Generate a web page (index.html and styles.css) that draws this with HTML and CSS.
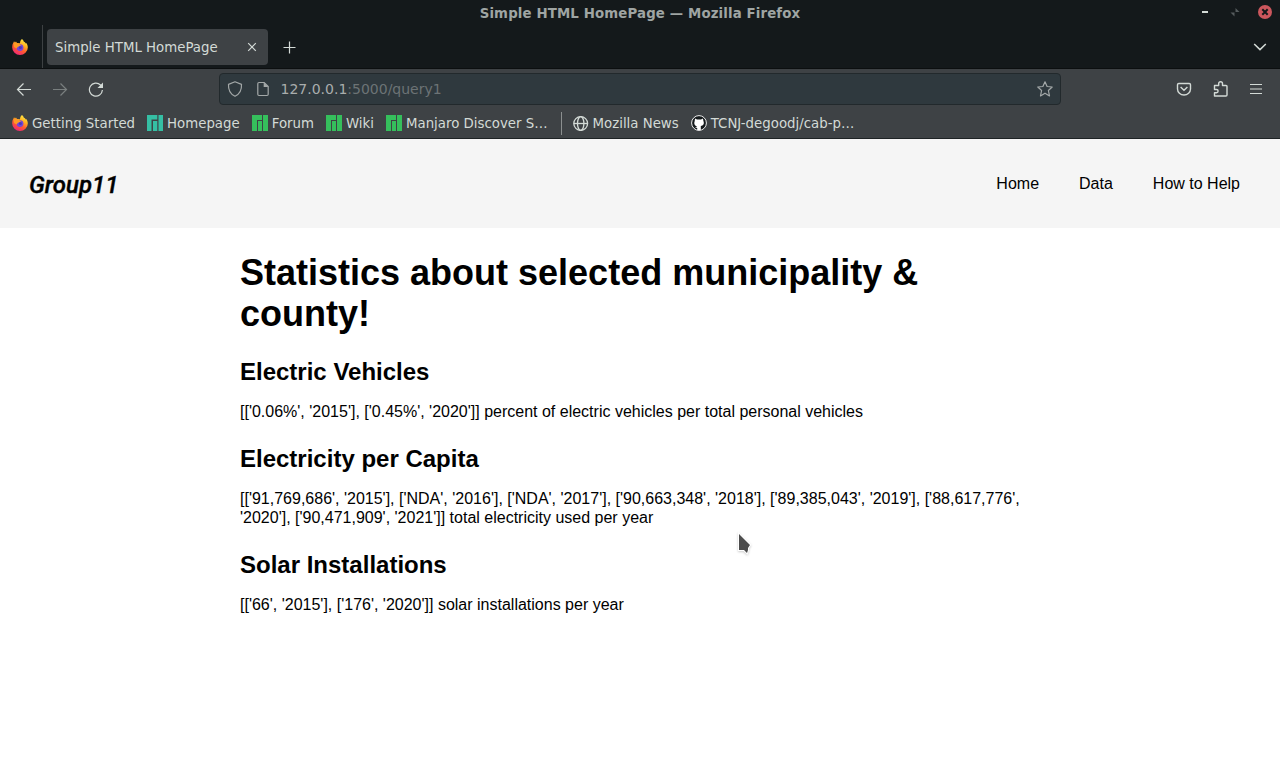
FILE: index.html
```html
<!DOCTYPE html>
<html lang="en">
<head>
<meta charset="utf-8">
<title>Simple HTML HomePage</title>
<link rel="stylesheet" href="styles.css">
</head>
<body>
<svg class="defs" width="0" height="0">
  <defs>
    <linearGradient id="flame" x1="0.8" y1="0" x2="0.3" y2="1">
      <stop offset="0" stop-color="#fff04a"/><stop offset="0.35" stop-color="#ffb321"/>
      <stop offset="0.65" stop-color="#ff5a30"/><stop offset="1" stop-color="#f0237c"/>
    </linearGradient>
    <symbol id="firefox" viewBox="0 0 16 16">
      <path fill="url(#flame)" d="M10 0c1 1 1.600 1.700 1.900 2.800C13 3 13.500 4 13.700 4.600L14.300 4C15.200 5.300 15.800 6.800 15.800 8.500A7.800 7.500 0 0 1 .2 8.500C.2 6.300.6 4.800 1.600 3.300L2 2.300 3 3.600 4 2.500 5 4l3 .3C8 2.500 8.800 1 10 0z"/>
      <circle cx="8" cy="8.600" r="3.400" fill="#7345d9"/>
      <path fill="#ff9a24" d="M2 4.500c2-1 4-.6 5.500.8L9 6.500 6 7.700 4.500 9.500 2 8z"/>
      <circle cx="8.400" cy="8.600" r="1.500" fill="#4a3bb5"/>
    </symbol>
    <symbol id="manjaro-wide" viewBox="0 0 16 16">
      <path fill="currentColor" d="M0 0h10.300v4.500H4.500V16H0zM6 6h4.300v10H6zM11.500 0H16v16h-4.500z"/>
    </symbol>
    <symbol id="manjaro" viewBox="0 0 16 16">
      <path fill="currentColor" d="M0 0h10v5H5v11H0zM6 6h4v10H6zM11 0h5v16h-5z"/>
    </symbol>
  </defs>
</svg>

<div class="titlebar">
  <span class="window-title">Simple HTML HomePage — Mozilla Firefox</span>
  <div class="window-controls">
    <svg width="14" height="14"><path fill="#d3dad6" d="M4 6h6v2H4z"/></svg>
    <svg width="14" height="14"><path fill="#555b5d" d="M7.500 3v4h4zM2.500 7.500h4v4z"/></svg>
    <svg width="14" height="14"><circle cx="7" cy="7" r="7" fill="#cc575d"/><path stroke="#14191b" stroke-width="2" d="m4.300 4.300 5.400 5.400m0-5.400L4.300 9.700"/></svg>
  </div>
</div>

<div class="tabbar">
  <div class="pinned"><svg width="16" height="16"><use href="#firefox"/></svg></div>
  <div class="tab"><span>Simple HTML HomePage</span>
    <svg width="10" height="10" class="line"><path d="m1.200 1.200 7.600 7.600m0-7.600L1.200 8.800"/></svg>
  </div>
  <svg class="line new-tab" width="14" height="14"><path d="M6.500 .5v12M.5 6.500h12"/></svg>
  <svg class="line all-tabs" width="14" height="10"><path d="m1.200 2 5.800 5.600L12.800 2"/></svg>
</div>

<div class="toolbar">
  <div class="nav">
    <svg class="line" width="16" height="16"><path d="M15 8.500H1.500M7.500 2.500l-6 6 6 6"/></svg>
    <svg class="line disabled" width="16" height="16"><path d="M1 8.500h13.500M8.500 2.500l6 6-6 6"/></svg>
    <svg class="line" width="16" height="16"><path d="M14.400 9A6.500 6.500 0 1 1 12.500 4L14 5.500"/><path class="solid" d="M15 1.500v5.500H9.500z"/></svg>
  </div>
  <div class="urlbar">
    <svg class="line muted" width="16" height="16"><path d="M8 .8 14.500 3.400C14.800 8.500 13 13 8 15.300 3 13 1.200 8.500 1.500 3.400z" stroke-linejoin="round"/></svg>
    <svg class="line muted page" width="16" height="16"><path d="M4 1.500h5.200l4 4v7.800q0 1.200-1.200 1.200H4q-1.200 0-1.200-1.200V2.700q0-1.200 1.200-1.200z"/><path class="solid" d="M8.700 1.200V6h4.800z"/></svg>
    <span class="url">127.0.0.1<i>:5000/query1</i></span>
    <svg class="line muted" width="16" height="16"><path stroke-linejoin="round" d="m8 .8 2.100 4.700 5.100.5-3.800 3.500 1.100 5.400L8 12.200l-4.500 2.700 1.100-5.400L.8 6l5.100-.5z"/></svg>
  </div>
  <div class="actions">
    <svg class="line" width="16" height="16"><path stroke-width="1.400" d="M2.800 2.500h10.400q1.300 0 1.300 1.300V8a6.500 6 0 0 1-13 0V3.800q0-1.300 1.300-1.300zM4.600 6 8 9.200 11.400 6"/></svg>
    <svg class="line" width="16" height="16"><path stroke-width="1.400" stroke-linejoin="round" d="M2.500 15h11.500q1 0 1-1V5.500q0-1-1-1H10.500V2.600a1.900 1.900 0 0 0-3.800 0v1.900H2.500v4h2a1.600 1.600 0 0 1 0 3.200h-2z"/></svg>
    <svg class="line" width="16" height="16"><path d="M2 3.500h12M2 8h12M2 12.500h12"/></svg>
  </div>
</div>

<div class="bookmarks">
  <div class="bookmark"><svg width="16" height="16"><use href="#firefox"/></svg><span>Getting Started</span></div>
  <div class="bookmark teal"><svg width="16" height="16"><use href="#manjaro-wide"/></svg><span>Homepage</span></div>
  <div class="bookmark green"><svg width="16" height="16"><use href="#manjaro"/></svg><span>Forum</span></div>
  <div class="bookmark green"><svg width="16" height="16"><use href="#manjaro"/></svg><span>Wiki</span></div>
  <div class="bookmark green"><svg width="16" height="16"><use href="#manjaro"/></svg><span>Manjaro Discover S…</span></div>
  <div class="divider"></div>
  <div class="bookmark"><svg class="line" width="16" height="16"><g stroke-width="1.300"><circle cx="7.700" cy="8.500" r="6.900"/><ellipse cx="7.700" cy="8.500" rx="3.200" ry="6.900"/><path d="M.8 8.500h14"/></g></svg><span>Mozilla News</span></div>
  <div class="bookmark"><svg width="16" height="16"><circle cx="8" cy="8" r="7.400" fill="#14191b" stroke="#eee"/><path fill="#fff" d="M4 3.600l2 .9h4l2-.9.4 2.500c1.200 3-.2 4.600-2.600 5V15.300H6.200V13l-2.200-.8 2.200-.8C3.600 11 2.600 9 3.700 6.100z"/></svg><span>TCNJ-degoodj/cab-p…</span></div>
</div>

<header class="site-header">
  <div class="logo">Group11</div>
  <nav class="menu"><span>Home</span><span>Data</span><span>How to Help</span></nav>
</header>

<main class="content">
  <h1>Statistics about selected municipality &amp; county!</h1>
  <h2>Electric Vehicles</h2>
  <p>[['0.06%', '2015'], ['0.45%', '2020']] percent of electric vehicles per total personal vehicles</p>
  <h2>Electricity per Capita</h2>
  <p>[['91,769,686', '2015'], ['NDA', '2016'], ['NDA', '2017'], ['90,663,348', '2018'], ['89,385,043', '2019'], ['88,617,776', '2020'], ['90,471,909', '2021']] total electricity used per year</p>
  <h2>Solar Installations</h2>
  <p>[['66', '2015'], ['176', '2020']] solar installations per year</p>
</main>
<svg class="cursor" width="20" height="26"><path fill="#4d4d4d" stroke="#fff" stroke-width="2" paint-order="stroke" d="M4 3v16h5l3 3 1-3v-2l2-3z"/></svg>
</body>
</html>
```
FILE: styles.css
```css
* { box-sizing: border-box; }
body { margin: 0; height: 776px; overflow: hidden; background: #fff; color: #000; font-family: "Liberation Sans", Arial, sans-serif; font-size: 16px; }
svg { display: block; flex: none; }
.defs { position: absolute; }
.titlebar, .tabbar, .toolbar, .bookmarks { display: flex; align-items: center; font-family: "DejaVu Sans", sans-serif; font-size: 13.333px; color: #d3dad6; white-space: nowrap; }
.line { fill: none; stroke: #d3dad6; stroke-width: 1.2; }
.solid { fill: #d3dad6; stroke: none; }
.muted { stroke: #a3a8a8; }
.muted .solid { fill: #a3a8a8; }
.disabled { opacity: .4; }

.titlebar { height: 25px; background: #14191b; display: grid; grid-template-columns: 1fr auto 1fr; }
.window-title { grid-column: 2; padding-top: 2px; font-weight: bold; letter-spacing: .13px; color: #9fa5a3; }
.window-controls { display: flex; justify-content: flex-end; gap: 16px; padding: 0 8px 1px 0; }

.tabbar { height: 44px; background: #14191b; border-bottom: 1px solid #0c0f10; }
.pinned { width: 43px; height: 43px; padding: 14px 0 0 12px; border-right: 1px solid #3d4143; }
.tab { display: flex; align-items: center; justify-content: space-between; width: 221px; height: 36px; margin-left: 4px; padding: 0 11px 0 8px; border-radius: 4px; background: #3e4245; }
.tab span { padding-top: 2px; }
.new-tab { margin: 2px 0 0 15px; }
.all-tabs { margin-left: auto; margin-right: 13px; stroke-width: 1.5; }

.toolbar { height: 39px; background: #3e4245; }
.nav { display: flex; gap: 20px; padding: 1px 0 0 16px; width: 219px; }
.urlbar { display: flex; align-items: center; width: 842px; height: 32px; padding: 0 7px; border: 1px solid #22292c; border-radius: 4px; background: #2f393e; }
.page { margin-left: 12px; }
.url { flex: 1; margin-left: 9.5px; font-size: 14px; color: #a9adad; }
.url i { font-style: normal; color: #6c7375; }
.actions { display: flex; gap: 20px; margin-left: auto; padding: 1px 16px 0 0; }

.bookmarks { height: 31px; padding: 0 12px; gap: 12px; background: #3e4245; border-bottom: 1px solid #1e2325; }
.bookmark { display: flex; align-items: center; gap: 4px; }
.teal svg { color: #35bfa4; }
.green svg { color: #35bf5c; }
.divider { width: 1px; height: 23px; margin: 0 -1px 0 1px; background: #8b8f8f; }

.site-header { display: flex; align-items: center; justify-content: space-between; height: 89px; padding: 0 40px 0 29px; background: #f5f5f5; }
.logo { padding-top: 2px; font: italic 500 24px "Roboto", sans-serif; -webkit-text-stroke: .4px #000; }
.menu { display: flex; gap: 40px; }

.content { width: 800px; margin: 0 auto; padding-top: 24px; }
h1 { margin: 0 0 24px; font-size: 36px; line-height: 41px; }
h2 { margin: 0 0 17px; font-size: 24px; line-height: 27px; }
p { margin: 0 0 24px; line-height: 19px; }
.cursor { position: absolute; left: 735px; top: 531px; filter: drop-shadow(0 1px 1px #0003); }
```
